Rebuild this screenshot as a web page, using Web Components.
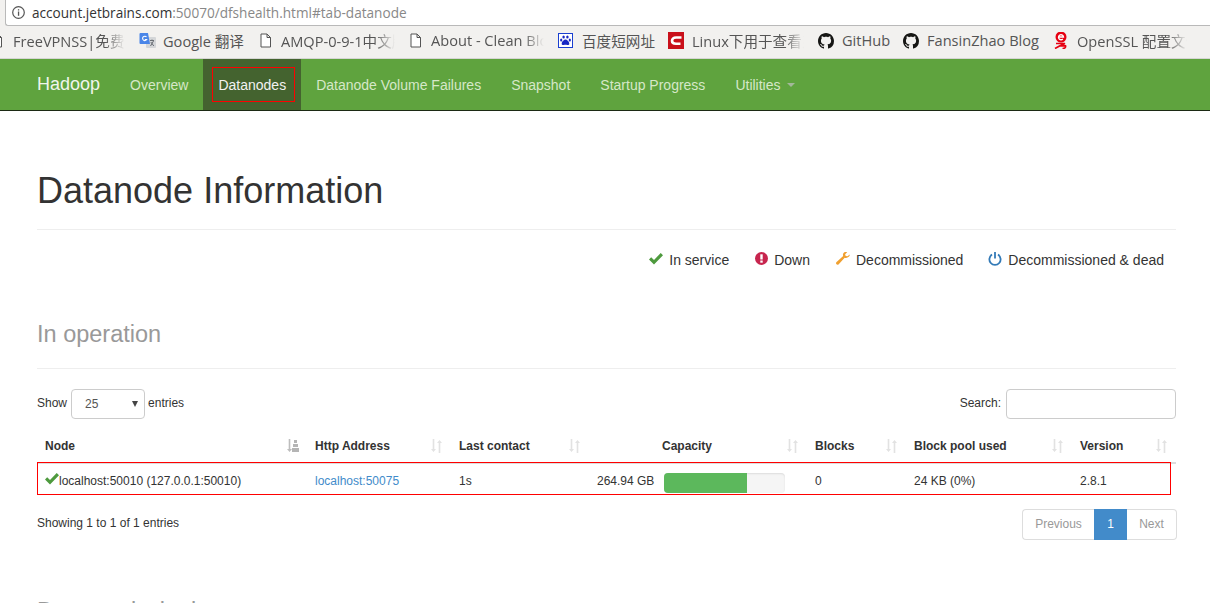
<!DOCTYPE html>
<html>
<head>
<meta charset="utf-8">
<title>Datanode Information</title>
<style>
    html, body { margin: 0; height: 603px; overflow: hidden; background: #fff; }
    body { font-family: "Liberation Sans", Arial, sans-serif; font-size: 14px; color: #333; }
</style>
</head>
<body>
<browser-bar url-host="account.jetbrains.com" url-rest=":50070/dfshealth.html#tab-datanode">
    <book-mark icon="page" width="149" shift="-10" style="--gap:10px" fade>FreeVPNSS|免费V</book-mark>
    <book-mark icon="translate" width="120" style="--gap:7px">Google 翻译</book-mark>
    <book-mark icon="page" width="150" style="--gap:9px" fade>AMQP-0-9-1中文版</book-mark>
    <book-mark icon="page" width="149" style="--gap:9px" fade>About - Clean Blog</book-mark>
    <book-mark icon="baidu" width="110" style="--gap:9px">百度短网址</book-mark>
    <book-mark icon="csdn" width="150" fade>Linux下用于查看系统</book-mark>
    <book-mark icon="github" width="85">GitHub</book-mark>
    <book-mark icon="github" width="151">FansinZhao Blog</book-mark>
    <book-mark icon="netease" width="147" style="--gap:9px" fade>OpenSSL 配置文件</book-mark>
</browser-bar>

<hadoop-nav brand="Hadoop">
    <nav-item>Overview</nav-item>
    <nav-item active>Datanodes</nav-item>
    <nav-item>Datanode Volume Failures</nav-item>
    <nav-item>Snapshot</nav-item>
    <nav-item>Startup Progress</nav-item>
    <nav-item caret>Utilities</nav-item>
</hadoop-nav>

<datanode-page></datanode-page>

<script>
// shared icon markup, all drawn on small viewBoxes
const ICONS = {
    page: `<svg width="13" height="15" viewBox="0 0 13 15"><path d="M2 1h6l3.500 3.500V14H2z M8 1v3.500h3.500" fill="#fff" stroke="#555" stroke-width="1"/></svg>`,
    translate: `<svg width="17" height="17" viewBox="0 0 17 17"><rect x="7" y="5" width="10" height="11" rx="1" fill="#d4d6d8"/><path d="M11 8.500h4M13 7.500v1M11.500 14l3-5M11.800 10l3 4" stroke="#6b7076" stroke-width="1" fill="none"/><path d="M1.500 1h7.500l2 11H1.500A1 1 0 0 1 .5 11V2a1 1 0 0 1 1-1z" fill="#4a86e8"/><path d="M7.500 5a2.200 2.200 0 1 0 .2 2.500H5.800" stroke="#fff" stroke-width="1.100" fill="none"/></svg>`,
    baidu: `<svg width="15" height="15" viewBox="0 0 15 15"><rect x=".5" y=".5" width="14" height="14" fill="#fff" stroke="#1a3fd0"/><g fill="#1626c4"><ellipse cx="5.600" cy="4" rx="1.200" ry="1.600"/><ellipse cx="9.400" cy="4" rx="1.200" ry="1.600"/><ellipse cx="3.200" cy="7" rx="1.100" ry="1.500"/><ellipse cx="11.800" cy="7" rx="1.100" ry="1.500"/><path d="M7.500 6.500c-1.800 0-3.800 2.500-3.800 4.200 0 1.300 1.200 1.500 2 1.300.7-.2 1.200-.3 1.800-.3s1.100.1 1.800.3c.8.2 2 0 2-1.300 0-1.700-2-4.200-3.800-4.200z"/></g></svg>`,
    csdn: `<svg width="16" height="17" viewBox="0 0 16 17"><rect width="16" height="17" fill="#c9101a"/><path d="M13.500 5.500H8C5.500 5.500 4 7 4 8.700s1.500 3 4 3h4.500" stroke="#fff" stroke-width="2.600" fill="none"/></svg>`,
    github: `<svg width="16" height="16" viewBox="0 0 16 16"><path fill="#161614" d="M8 0C3.580 0 0 3.580 0 8c0 3.540 2.290 6.530 5.470 7.590.4.070.55-.17.550-.38 0-.19-.01-.82-.01-1.490-2.010.370-2.530-.49-2.690-.94-.09-.23-.48-.94-.82-1.130-.28-.15-.68-.52-.01-.53.630-.01 1.080.58 1.230.82.720 1.210 1.870.87 2.330.66.070-.52.280-.87.510-1.070-1.780-.2-3.640-.89-3.640-3.950 0-.87.310-1.590.820-2.150-.08-.2-.36-1.020.08-2.120 0 0 .67-.21 2.200.82.640-.18 1.320-.27 2-.27s1.360.09 2 .27c1.530-1.040 2.200-.82 2.200-.82.440 1.100.16 1.920.08 2.120.51.560.82 1.270.82 2.150 0 3.070-1.870 3.750-3.650 3.950.29.250.54.730.54 1.480 0 1.070-.01 1.930-.01 2.200 0 .21.150.46.550.38A8.010 8.010 0 0 0 16 8c0-4.420-3.580-8-8-8z"/></svg>`,
    netease: `<svg width="14" height="17" viewBox="0 0 14 17"><circle cx="7" cy="5" r="5.500" fill="#e60012"/><path d="M4.500 5h5A2.500 2.500 0 1 0 8.800 7" stroke="#fff" stroke-width="1.300" fill="none"/><path d="M2 11.500h9l-5 2.300h5.500c.5 1.800-1 2.700-3 2.700M1 16.500l5-2.700" stroke="#e60012" stroke-width="1.700" fill="none"/></svg>`,
    ok: `<svg width="14" height="12" viewBox="0 0 14 12"><path d="M0 6.500l2.200-2.200 2.800 2.800L11.700 0 14 2.200 5 11.500z" fill="#4e9a3e"/></svg>`,
    down: `<svg width="13" height="13" viewBox="0 0 13 13"><circle cx="6.500" cy="6.500" r="6.500" fill="#c7254e"/><rect x="5.300" y="2.300" width="2.400" height="5.200" fill="#fff"/><rect x="5.300" y="8.500" width="2.400" height="2.200" fill="#fff"/></svg>`,
    wrench: `<svg width="14" height="13" viewBox="0 0 15 14"><path d="M14.700 2.700l-2.300 2-2-.5-.6-1.900L12 .3C10.300-.3 8.600.2 7.900 1.400c-.6 1-.6 2-.2 2.800L.6 10.700c-.8.800-.8 1.800-.1 2.500s1.700.6 2.400-.1l6.400-7c1 .4 2.300.3 3.500-.4 1.500-1 2.200-1.800 1.900-3z" fill="#f0a030"/></svg>`,
    off: `<svg width="14" height="14" viewBox="0 0 14 14"><path d="M4 2.600a5.600 5.600 0 1 0 6 0" stroke="#337ab7" stroke-width="1.800" fill="none"/><rect x="6.100" y="0" width="1.800" height="6.500" fill="#337ab7"/></svg>`
};

class BrowserBar extends HTMLElement {
    constructor() {
        super();
        this.attachShadow({ mode: 'open' });
        this.shadowRoot.innerHTML = `
            <style>
                :host { display: block; font-family: "Open Sans", "Noto Sans CJK SC", sans-serif; background: #f2f1ef; }
                .url {
                    height: 25px;
                    display: flex;
                    align-items: center;
                    margin-left: 5px;
                    padding-left: 6px;
                    gap: 7px;
                    border-left: 1px solid #b9b9b9;
                    border-bottom: 1px solid #b9b9b9;
                    border-bottom-left-radius: 3px;
                    font-size: 13.600px;
                    color: #888;
                    background: #fff;
                }
                .host { color: #333; }
                .marks {
                    height: 33px;
                    box-sizing: border-box;
                    padding-bottom: 3px;
                    display: flex;
                    align-items: center;
                    border-bottom: 1px solid #d6d6d4;
                    overflow: hidden;
                }
            </style>
            <div class="url">
                <svg width="13" height="13" viewBox="0 0 13 13"><circle cx="6.500" cy="6.500" r="5.800" fill="none" stroke="#555" stroke-width="1.200"/><rect x="5.900" y="5.500" width="1.300" height="4.300" fill="#555"/><rect x="5.900" y="3.200" width="1.300" height="1.300" fill="#555"/></svg>
                <span><span class="host">${this.getAttribute('url-host')}</span>${this.getAttribute('url-rest')}</span>
            </div>
            <div class="marks"><slot></slot></div>
        `;
    }
}

class BookMark extends HTMLElement {
    constructor() {
        super();
        this.attachShadow({ mode: 'open' });
        const icon = this.getAttribute('icon');
        const width = this.getAttribute('width');
        const shift = this.getAttribute('shift') || 0;
        this.shadowRoot.innerHTML = `
            <style>
                :host {
                    display: flex;
                    flex: none;
                    align-items: center;
                    gap: var(--gap, 8px);
                    box-sizing: border-box;
                    width: ${width}px;
                    margin-left: ${shift}px;
                    padding-right: 14px;
                    font-size: 14.600px;
                    color: #555;
                }
                svg { flex: none; display: block; }
                .label { white-space: nowrap; margin-top: -1px; }
                :host([fade]) .label {
                    overflow: hidden;
                    -webkit-mask-image: linear-gradient(to right, #000 82%, transparent 100%);
                    mask-image: linear-gradient(to right, #000 82%, transparent 100%);
                }
            </style>
            ${ICONS[icon]}
            <span class="label"><slot></slot></span>
        `;
    }
}

class HadoopNav extends HTMLElement {
    constructor() {
        super();
        this.attachShadow({ mode: 'open' });
        this.shadowRoot.innerHTML = `
            <style>
                :host {
                    display: flex;
                    height: 51px;
                    background: #5fa33e;
                    border-bottom: 1px solid #1c2a14;
                    padding-left: 37px;
                }
                .brand {
                    font-size: 18px;
                    color: #f0f5ec;
                    line-height: 51px;
                    margin-right: 15px;
                }
            </style>
            <span class="brand">${this.getAttribute('brand')}</span>
            <slot></slot>
        `;
    }
}

class NavItem extends HTMLElement {
    constructor() {
        super();
        this.attachShadow({ mode: 'open' });
        this.shadowRoot.innerHTML = `
            <style>
                :host {
                    display: flex;
                    align-items: center;
                    gap: 6px;
                    position: relative;
                    padding: 0 15px;
                    font-size: 14px;
                    color: #d6e8c8;
                }
                :host([active]) { background: #44632f; color: #f2f2f2; }
                .mark {
                    position: absolute;
                    left: 9px; right: 6px; top: 8px; bottom: 8px;
                    border: 1px solid #f00;
                }
                .caret {
                    width: 0; height: 0;
                    border-left: 4px solid transparent;
                    border-right: 4px solid transparent;
                    border-top: 4px solid #a3b89a;
                }
            </style>
            <slot></slot>
            ${this.hasAttribute('caret') ? '<span class="caret"></span>' : ''}
            ${this.hasAttribute('active') ? '<span class="mark"></span>' : ''}
        `;
    }
}

class LegendItem extends HTMLElement {
    constructor() {
        super();
        this.attachShadow({ mode: 'open' });
        this.shadowRoot.innerHTML = `
            <style>
                :host { display: flex; align-items: center; gap: 6px; line-height: 20px; font-size: 14px; }
                svg { display: block; margin-top: -3px; }
            </style>
            ${ICONS[this.getAttribute('icon')]}
            <span><slot></slot></span>
        `;
    }
}

class SortHead extends HTMLElement {
    constructor() {
        super();
        this.attachShadow({ mode: 'open' });
        const asc = this.hasAttribute('asc');
        const right = asc
            ? '<g fill="#b5b5b5"><rect x="8" y="1" width="3" height="3"/><rect x="7" y="5" width="5" height="3"/><rect x="6" y="9" width="7" height="4"/></g>'
            : '<path d="M9.500 1L7 4h1.700v10h1.600V4H12z" fill="#e2e2e2"/>';
        const left = asc ? '#bdbdbd' : '#e2e2e2';
        this.shadowRoot.innerHTML = `
            <style>
                :host {
                    display: flex;
                    justify-content: space-between;
                    align-items: center;
                    font-weight: bold;
                    font-size: 12px;
                }
                svg { display: block; flex: none; }
            </style>
            <span><slot></slot></span>
            <svg width="13" height="14" viewBox="0 0 13 14"><path d="M3.500 13L6 10H4.300V0H2.700v10H1z" fill="${left}"/>${right}</svg>
        `;
    }
}

class CapacityBar extends HTMLElement {
    constructor() {
        super();
        this.attachShadow({ mode: 'open' });
        this.shadowRoot.innerHTML = `
            <style>
                :host {
                    display: block;
                    width: 121px;
                    height: 20px;
                    background: #f5f5f5;
                    border-radius: 4px;
                    box-shadow: inset 0 1px 2px rgba(0,0,0,.1);
                    overflow: hidden;
                }
                .fill { height: 100%; background: #5cb85c; width: ${this.getAttribute('value')}%; }
            </style>
            <div class="fill"></div>
        `;
    }
}

class PagerBar extends HTMLElement {
    constructor() {
        super();
        this.attachShadow({ mode: 'open' });
        this.shadowRoot.innerHTML = `
            <style>
                :host { display: flex; font-size: 12px; color: #999; height: 31px; box-sizing: border-box; }
                span {
                    display: flex;
                    align-items: center;
                    justify-content: center;
                    box-sizing: border-box;
                    padding-bottom: 2px;
                    border: 1px solid #ddd;
                    background: #fff;
                }
                .prev { width: 72px; border-radius: 4px 0 0 4px; border-right: 0; }
                .cur { width: 33px; background: #428bca; border-color: #428bca; color: #fff; }
                .next { width: 50px; border-radius: 0 4px 4px 0; border-left: 0; }
            </style>
            <span class="prev">Previous</span>
            <span class="cur">1</span>
            <span class="next">Next</span>
        `;
    }
}

class NodeTable extends HTMLElement {
    constructor() {
        super();
        this.attachShadow({ mode: 'open' });
        this.shadowRoot.innerHTML = `
            <style>
                :host { display: block; position: relative; font-size: 12px; margin-top: 11px; }
                table { border-collapse: collapse; table-layout: fixed; width: 100%; }
                th { padding: 0 8px; height: 33px; text-align: left; border-bottom: 2px solid #ddd; box-sizing: border-box; }
                td { padding: 0 8px; height: 34px; box-sizing: border-box; }
                .cap-head { padding-left: 73px; }
                .cap { display: flex; align-items: center; gap: 10px; }
                .cap span { flex: none; width: 57px; text-align: right; white-space: nowrap; }
                .cap capacity-bar { margin-top: 5px; }
                .node { display: flex; align-items: center; white-space: nowrap; }
                .node svg { display: block; margin-top: -3px; }
                a { color: #428bca; text-decoration: none; }
                .highlight {
                    position: absolute;
                    left: 0; top: 32px;
                    width: 1134px; height: 33px;
                    box-sizing: border-box;
                    border: 1px solid #f00;
                    pointer-events: none;
                }
            </style>
            <table>
                <colgroup>
                    <col style="width:270px"><col style="width:144px"><col style="width:138px">
                    <col style="width:218px"><col style="width:99px"><col style="width:166px"><col style="width:104px">
                </colgroup>
                <thead>
                    <tr>
                        <th><sort-head asc>Node</sort-head></th>
                        <th><sort-head>Http Address</sort-head></th>
                        <th><sort-head>Last contact</sort-head></th>
                        <th class="cap-head"><sort-head>Capacity</sort-head></th>
                        <th><sort-head>Blocks</sort-head></th>
                        <th><sort-head>Block pool used</sort-head></th>
                        <th><sort-head>Version</sort-head></th>
                    </tr>
                </thead>
                <tbody>
                    <tr>
                        <td><div class="node">${ICONS.ok}<span>localhost:50010 (127.0.0.1:50010)</span></div></td>
                        <td><a href="#">localhost:50075</a></td>
                        <td>1s</td>
                        <td><div class="cap"><span>264.94 GB</span><capacity-bar value="69"></capacity-bar></div></td>
                        <td>0</td>
                        <td>24 KB (0%)</td>
                        <td>2.8.1</td>
                    </tr>
                </tbody>
            </table>
            <div class="highlight"></div>
        `;
    }
}

class DatanodePage extends HTMLElement {
    constructor() {
        super();
        this.attachShadow({ mode: 'open' });
        this.shadowRoot.innerHTML = `
            <style>
                :host { display: block; padding: 0 34px 0 37px; color: #333; }
                h1 {
                    margin: 60px 0 0;
                    padding-bottom: 18px;
                    font-size: 36px;
                    font-weight: 500;
                    line-height: 40px;
                    border-bottom: 1px solid #eee;
                }
                .legend {
                    display: flex;
                    justify-content: flex-end;
                    gap: 26px;
                    margin-top: 20px;
                    padding-right: 12px;
                }
                .legend .tight { margin-right: -1px; }
                h2 {
                    margin: 51px 0 0;
                    font-size: 23.500px;
                    font-weight: 500;
                    line-height: 26px;
                    color: #999;
                }
                .sub { padding-bottom: 21px; border-bottom: 1px solid #eee; }
                .controls {
                    display: flex;
                    justify-content: space-between;
                    align-items: center;
                    margin-top: 20px;
                    font-size: 12px;
                }
                .controls > div { display: flex; align-items: center; }
                .controls label { padding-bottom: 2px; }
                .select {
                    display: flex;
                    align-items: center;
                    justify-content: space-between;
                    box-sizing: border-box;
                    width: 74px;
                    height: 30px;
                    margin: 0 3px 0 4px;
                    padding: 0 6px 0 13px;
                    border: 1px solid #ccc;
                    border-radius: 4px;
                    color: #555;
                }
                .select i {
                    width: 0; height: 0;
                    border-left: 3.500px solid transparent;
                    border-right: 3.500px solid transparent;
                    border-top: 6px solid #444;
                }
                .search { width: 170px; height: 30px; margin-left: 5px; box-sizing: border-box; border: 1px solid #ccc; border-radius: 4px; }
                .foot {
                    display: flex;
                    justify-content: space-between;
                    align-items: center;
                    margin-top: 12px;
                    margin-right: -1px;
                    font-size: 12px;
                }
                .foot > span { margin-bottom: 3px; }
                .next-head { margin-top: 58px; }
            </style>
            <h1>Datanode Information</h1>
            <div class="legend">
                <legend-item icon="ok">In service</legend-item>
                <legend-item icon="down">Down</legend-item>
                <legend-item class="tight" icon="wrench">Decommissioned</legend-item>
                <legend-item icon="off">Decommissioned &amp; dead</legend-item>
            </div>
            <h2 class="sub">In operation</h2>
            <div class="controls">
                <div><label>Show</label><span class="select">25<i></i></span><label>entries</label></div>
                <div><label>Search:</label><span class="search"></span></div>
            </div>
            <node-table></node-table>
            <div class="foot">
                <span>Showing 1 to 1 of 1 entries</span>
                <pager-bar></pager-bar>
            </div>
            <h2 class="next-head">Decommissioning</h2>
        `;
    }
}

// children first so their shadow roots exist when the page upgrades
customElements.define('book-mark', BookMark);
customElements.define('browser-bar', BrowserBar);
customElements.define('nav-item', NavItem);
customElements.define('hadoop-nav', HadoopNav);
customElements.define('legend-item', LegendItem);
customElements.define('sort-head', SortHead);
customElements.define('capacity-bar', CapacityBar);
customElements.define('pager-bar', PagerBar);
customElements.define('node-table', NodeTable);
customElements.define('datanode-page', DatanodePage);
</script>
</body>
</html>
